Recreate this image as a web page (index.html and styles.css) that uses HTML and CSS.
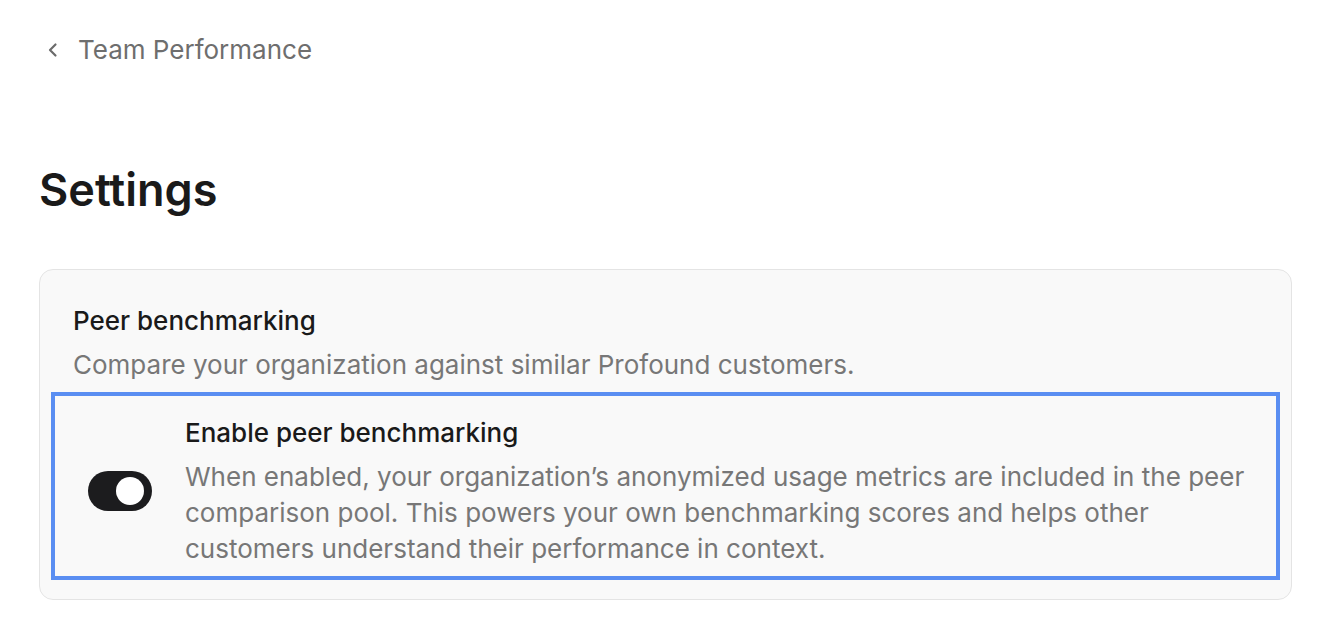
FILE: index.html
```html
<!DOCTYPE html>
<html>
<head>
<meta charset="utf-8">
<link rel="stylesheet" href="styles.css">
</head>
<body>
<div class="page">
  <a class="back" href="#">
    <svg class="chev" width="12" height="16" viewBox="0 0 12 16"><path d="M8.5 2.5 L3 8 L8.5 13.5" fill="none" stroke="#6b6b6b" stroke-width="2.2" stroke-linecap="round" stroke-linejoin="round"/></svg>
    <span>Team Performance</span>
  </a>
  <h1 class="title">Settings</h1>
  <section class="card">
    <h2 class="card-title">Peer benchmarking</h2>
    <p class="card-desc">Compare your organization against similar Profound customers.</p>
    <div class="row">
      <div class="toggle"><div class="knob"></div></div>
      <div class="row-text">
        <div class="row-title">Enable peer benchmarking</div>
        <div class="row-desc">When enabled, your organization’s anonymized usage metrics are included in the peer comparison pool. This powers your own benchmarking scores and helps other customers understand their performance in context.</div>
      </div>
    </div>
  </section>
</div>
</body>
</html>
```
FILE: styles.css
```css
* { box-sizing: border-box; }
html, body { margin: 0; padding: 0; background: #fff; }
body { font-family: Inter, "Noto Sans", sans-serif; color: #1a1a1a; }
.page { padding: 32px 38px 0 39px; }
.back {
  display: flex; align-items: center; gap: 19px;
  color: #6e6e6e; text-decoration: none;
  font-size: 26px; line-height: 36px;
  padding-left: 8px;
}
.chev { display: block; }
.title {
  margin: 94px 0 0 0;
  font-size: 45px; font-weight: 600; line-height: 56px;
  color: #1a1a1a;
}
.card {
  margin-top: 51px;
  background: #f9f9f9;
  border: 1.5px solid #e4e4e4;
  border-radius: 14px;
  padding: 33px 11px 19px 11px;
}
.card-title {
  margin: 0 0 0 22px;
  font-size: 26px; font-weight: 500; line-height: 36px;
  color: #1a1a1a;
}
.card-desc {
  margin: 8px 0 0 22px;
  font-size: 26px; line-height: 36px; color: #777;
}
.row {
  margin-top: 9px;
  border: 4px solid #5a8ef2;
  display: flex; align-items: center; gap: 33px;
  padding: 19px 20px 9px 33px;
}
.toggle {
  flex: none;
  width: 64px; height: 40px; border-radius: 20px;
  background: #1c1c1e;
  display: flex; align-items: center; justify-content: flex-end;
  padding-right: 8px;
}
.knob { width: 28px; height: 28px; border-radius: 50%; background: #fff; }
.row-title { font-size: 26px; font-weight: 500; line-height: 36px; color: #1a1a1a; }
.row-desc { margin-top: 8px; font-size: 26px; line-height: 36px; color: #777; }
```
